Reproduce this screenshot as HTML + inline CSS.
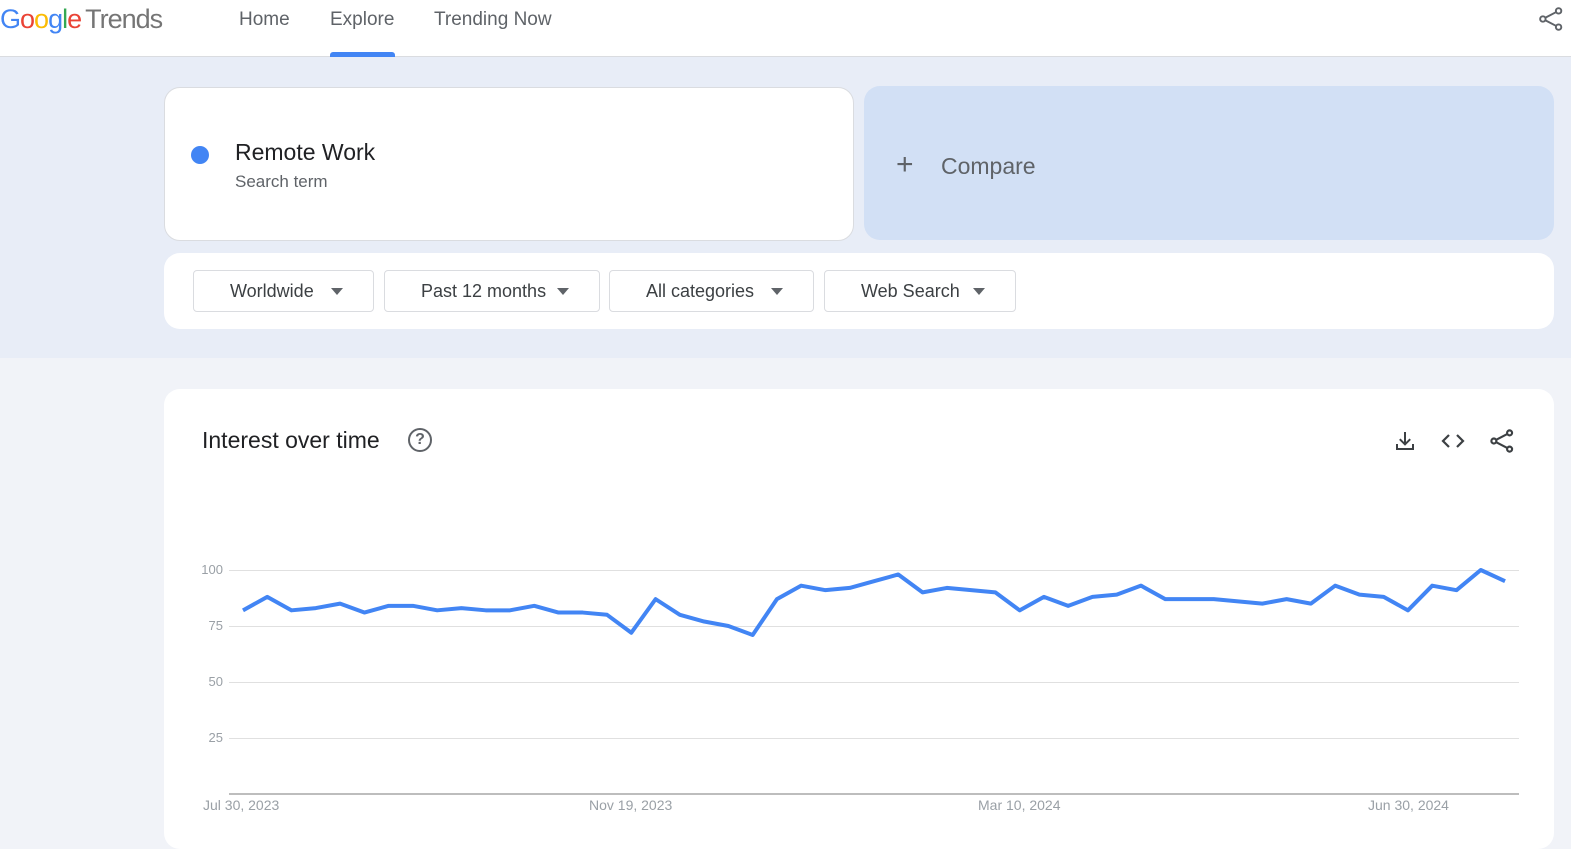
<!DOCTYPE html>
<html><head><meta charset="utf-8"><style>
*{box-sizing:border-box;margin:0;padding:0}
body{width:1571px;height:818px;overflow:hidden;background:#f1f3f8;font-family:"Liberation Sans",sans-serif;position:relative}
.hdr{position:absolute;left:0;top:0;width:1571px;height:57px;background:#fff;border-bottom:1px solid #dadce0}
.logo{position:absolute;left:0;top:4px;font-size:27px;letter-spacing:-1px}
.nav{position:absolute;top:9px;font-size:19px;color:#5f6368}
.top{position:absolute;left:0;top:57px;width:1571px;height:301px;background:#e8edf7}
.card{position:absolute;background:#fff;border-radius:16px}
.dd{position:absolute;top:270px;height:42px;border:1px solid #dadce0;border-radius:4px;background:#fff;font-size:18px;color:#3c4043;line-height:40px;padding-left:36px}
.dd:after{content:"";position:absolute;right:30px;top:17px;border-left:6px solid transparent;border-right:6px solid transparent;border-top:7px solid #5f6368}
.yl{position:absolute;left:190px;font-size:13px;color:#9aa0a6;width:33px;text-align:right}
.xl{position:absolute;top:797px;font-size:14px;color:#9aa0a6}
</style></head><body>
<div class="hdr">
<div class="logo"><span style="color:#4285f4">G</span><span style="color:#ea4335">o</span><span style="color:#fbbc05">o</span><span style="color:#4285f4">g</span><span style="color:#34a853">l</span><span style="color:#ea4335">e</span><span style="color:#757575;margin-left:4px">Trends</span></div>
<div class="nav" style="left:239px">Home</div>
<div class="nav" style="left:330px">Explore</div>
<div style="position:absolute;left:330px;top:52px;width:65px;height:5px;background:#4285f4;border-radius:3px 3px 0 0"></div>
<div class="nav" style="left:434px">Trending Now</div>
<svg style="position:absolute;left:1538px;top:6px" width="26" height="26" viewBox="0 0 24 24" fill="none" stroke="#5f6368" stroke-width="1.8"><circle cx="19" cy="4.5" r="2.5"/><circle cx="4.5" cy="12" r="2.5"/><circle cx="19" cy="19.5" r="2.5"/><path d="M6.7 10.8l10.1-5.2M6.7 13.2l10.1 5.2"/></svg>
</div>
<div class="top"></div>
<div class="card" style="left:164px;top:87px;width:690px;height:154px;border:1px solid #dadce0">
<div style="position:absolute;left:26px;top:58px;width:18px;height:18px;border-radius:50%;background:#4285f4"></div>
<div style="position:absolute;left:70px;top:51px;font-size:23px;color:#202124">Remote Work</div>
<div style="position:absolute;left:70px;top:84px;font-size:17px;color:#5f6368">Search term</div>
</div>
<div style="position:absolute;left:864px;top:86px;width:690px;height:154px;background:#d2e0f5;border-radius:16px">
<div style="position:absolute;left:32px;top:64px;font-size:30px;color:#5f6368;line-height:30px;font-weight:300">+</div>
<div style="position:absolute;left:77px;top:67px;font-size:23px;color:#5f6368">Compare</div>
</div>
<div class="card" style="left:164px;top:253px;width:1390px;height:76px"></div>
<div class="dd" style="left:193px;width:181px">Worldwide</div>
<div class="dd" style="left:384px;width:216px">Past 12 months</div>
<div class="dd" style="left:609px;width:205px">All categories</div>
<div class="dd" style="left:824px;width:192px">Web Search</div>
<div class="card" style="left:164px;top:389px;width:1390px;height:460px"></div>
<div style="position:absolute;left:202px;top:427px;font-size:23px;color:#202124">Interest over time</div>
<div style="position:absolute;left:408px;top:428px;width:24px;height:24px;border:2px solid #5f6368;border-radius:50%;font-size:16px;font-weight:bold;color:#5f6368;text-align:center;line-height:20px">?</div>
<svg style="position:absolute;left:1393px;top:429px" width="24" height="24" viewBox="0 0 24 24" fill="#3c4043"><path d="M11 3h2v10l3.5-3.5 1.4 1.4L12 16.8l-5.9-5.9 1.4-1.4L11 13z M3 15h2v4h14v-4h2v6H3z"/></svg>
<svg style="position:absolute;left:1441px;top:429px" width="24" height="24" viewBox="0 0 24 24" fill="none" stroke="#3c4043" stroke-width="2.2"><path d="M8 6l-6 6 6 6M16 6l6 6-6 6"/></svg>
<svg style="position:absolute;left:1489px;top:428px" width="26" height="26" viewBox="0 0 24 24" fill="none" stroke="#3c4043" stroke-width="2"><circle cx="19" cy="4.5" r="2.3"/><circle cx="4.5" cy="12" r="2.3"/><circle cx="19" cy="19.5" r="2.3"/><path d="M6.6 10.9l10.2-5.3M6.6 13.1l10.2 5.3"/></svg>
<div class="yl" style="top:562px">100</div><div class="yl" style="top:618px">75</div><div class="yl" style="top:674px">50</div><div class="yl" style="top:730px">25</div>
<svg style="position:absolute;left:0;top:0" width="1571" height="818">
<g stroke="#e0e0e0" stroke-width="1"><line x1="229" y1="570.5" x2="1519" y2="570.5"/><line x1="229" y1="626.5" x2="1519" y2="626.5"/><line x1="229" y1="682.5" x2="1519" y2="682.5"/><line x1="229" y1="738.5" x2="1519" y2="738.5"/></g>
<line x1="229" y1="794" x2="1519" y2="794" stroke="#bdbdbd" stroke-width="2"/>
<g transform="translate(243,794) scale(24.27,-2.24)"><polyline vector-effect="non-scaling-stroke" fill="none" stroke="#4285f4" stroke-width="4" stroke-linejoin="round" points="0,82 1,88 2,82 3,83 4,85 5,81 6,84 7,84 8,82 9,83 10,82 11,82 12,84 13,81 14,81 15,80 16,72 17,87 18,80 19,77 20,75 21,71 22,87 23,93 24,91 25,92 26,95 27,98 28,90 29,92 30,91 31,90 32,82 33,88 34,84 35,88 36,89 37,93 38,87 39,87 40,87 41,86 42,85 43,87 44,85 45,93 46,89 47,88 48,82 49,93 50,91 51,100 52,95"/></g>
</svg>
<div class="xl" style="left:203px">Jul 30, 2023</div>
<div class="xl" style="left:589px">Nov 19, 2023</div>
<div class="xl" style="left:978px">Mar 10, 2024</div>
<div class="xl" style="left:1368px">Jun 30, 2024</div>
</body></html>
